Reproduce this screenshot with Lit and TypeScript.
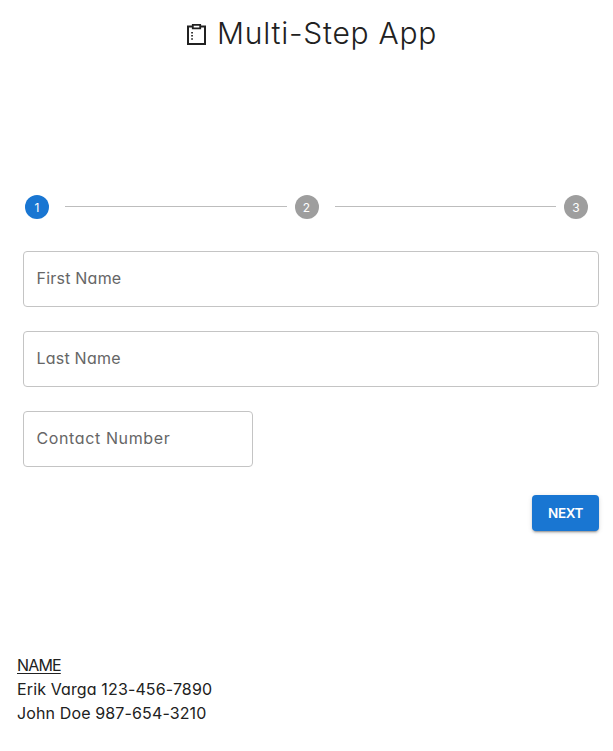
import { LitElement, html, css } from "lit";
import { customElement, property } from "lit/decorators.js";

@customElement("step-bar")
class StepBar extends LitElement {
  @property({ type: Number }) active = 1;
  static styles = css`
    :host { display: flex; align-items: center; height: 24px; }
    .dot {
      flex: none; box-sizing: border-box; width: 24px; height: 24px; border-radius: 50%;
      background: #9e9e9e; color: #fff; text-align: center;
      padding-top: 1px; font-size: 12px; line-height: 24px;
    }
    .dot.active { background: #1976d2; }
    .line { flex: 1; height: 1px; margin: 0 8px 1px 16px; background: #bdbdbd; }
  `;
  render() {
    return [1, 2, 3].map(
      (n) => html`${n > 1 ? html`<span class="line"></span>` : ""}
        <span class="dot ${n === this.active ? "active" : ""}">${n}</span>`
    );
  }
}

@customElement("app-root")
class AppRoot extends LitElement {
  static styles = css`
    :host {
      display: block; box-sizing: border-box; height: 751px; background: #fff;
      color: #212121; font-family: Inter, "Open Sans", sans-serif;
      font-feature-settings: "cv11"; font-size: 16px; line-height: 24px;
    }
    header {
      display: flex; align-items: center; height: 48px; padding: 10px 0 0 185px;
    }
    .icon { width: 24px; height: 24px; flex: none; }
    h1 {
      margin: 0 0 2px 8px; font-size: 30px; line-height: 46px; font-weight: 300;
      white-space: nowrap; letter-spacing: 0.75px;
    }
    step-bar { margin: 137px 25px 32px; }
    form { display: flex; flex-direction: column; gap: 24px; margin: 0 14px 0 23px; }
    .field {
      box-sizing: border-box; height: 56px; border: 1px solid #c4c4c4; border-radius: 4px;
      padding: 14px 12.5px; color: #666; white-space: nowrap; letter-spacing: 0.22px;
    }
    .short { width: 230px; letter-spacing: 0.62px; }
    .next {
      align-self: flex-end; width: 67px; height: 36px; margin-top: 4px; padding: 0;
      border: 0; border-radius: 4px; background: #1976d2; color: #fff;
      font: 600 13.5px/24px Inter, sans-serif; letter-spacing: -0.4px;
      box-shadow: 0 3px 1px -2px rgba(0,0,0,.2), 0 2px 2px rgba(0,0,0,.14), 0 1px 5px rgba(0,0,0,.12);
    }
    .list { margin: 122px 0 0 17px; white-space: nowrap; letter-spacing: 0.13px; }
    .name { text-decoration: underline; text-underline-offset: 2px; letter-spacing: -0.85px; }
  `;
  render() {
    return html`
      <header>
        <svg class="icon" viewBox="0 0 24 24" fill="none" stroke="#212121" stroke-width="2">
          <path d="M7 4.5H3V22h17V4.5h-4" />
          <path d="M7.8 2.8h7.4v3.6H7.8z" stroke-width="1.8" />
          <path d="M6.2 10.7h1.7M6.2 13.8h1.7M6.2 17h1.7" stroke-width="1.6" />
        </svg>
        <h1>Multi-Step App</h1>
      </header>
      <step-bar></step-bar>
      <form>
        <div class="field">First Name</div>
        <div class="field">Last Name</div>
        <div class="field short">Contact Number</div>
        <button class="next" type="button">NEXT</button>
      </form>
      <div class="list">
        <div><span class="name">NAME</span></div>
        <div>Erik Varga 123-456-7890</div>
        <div>John Doe 987-654-3210</div>
      </div>
    `;
  }
}
